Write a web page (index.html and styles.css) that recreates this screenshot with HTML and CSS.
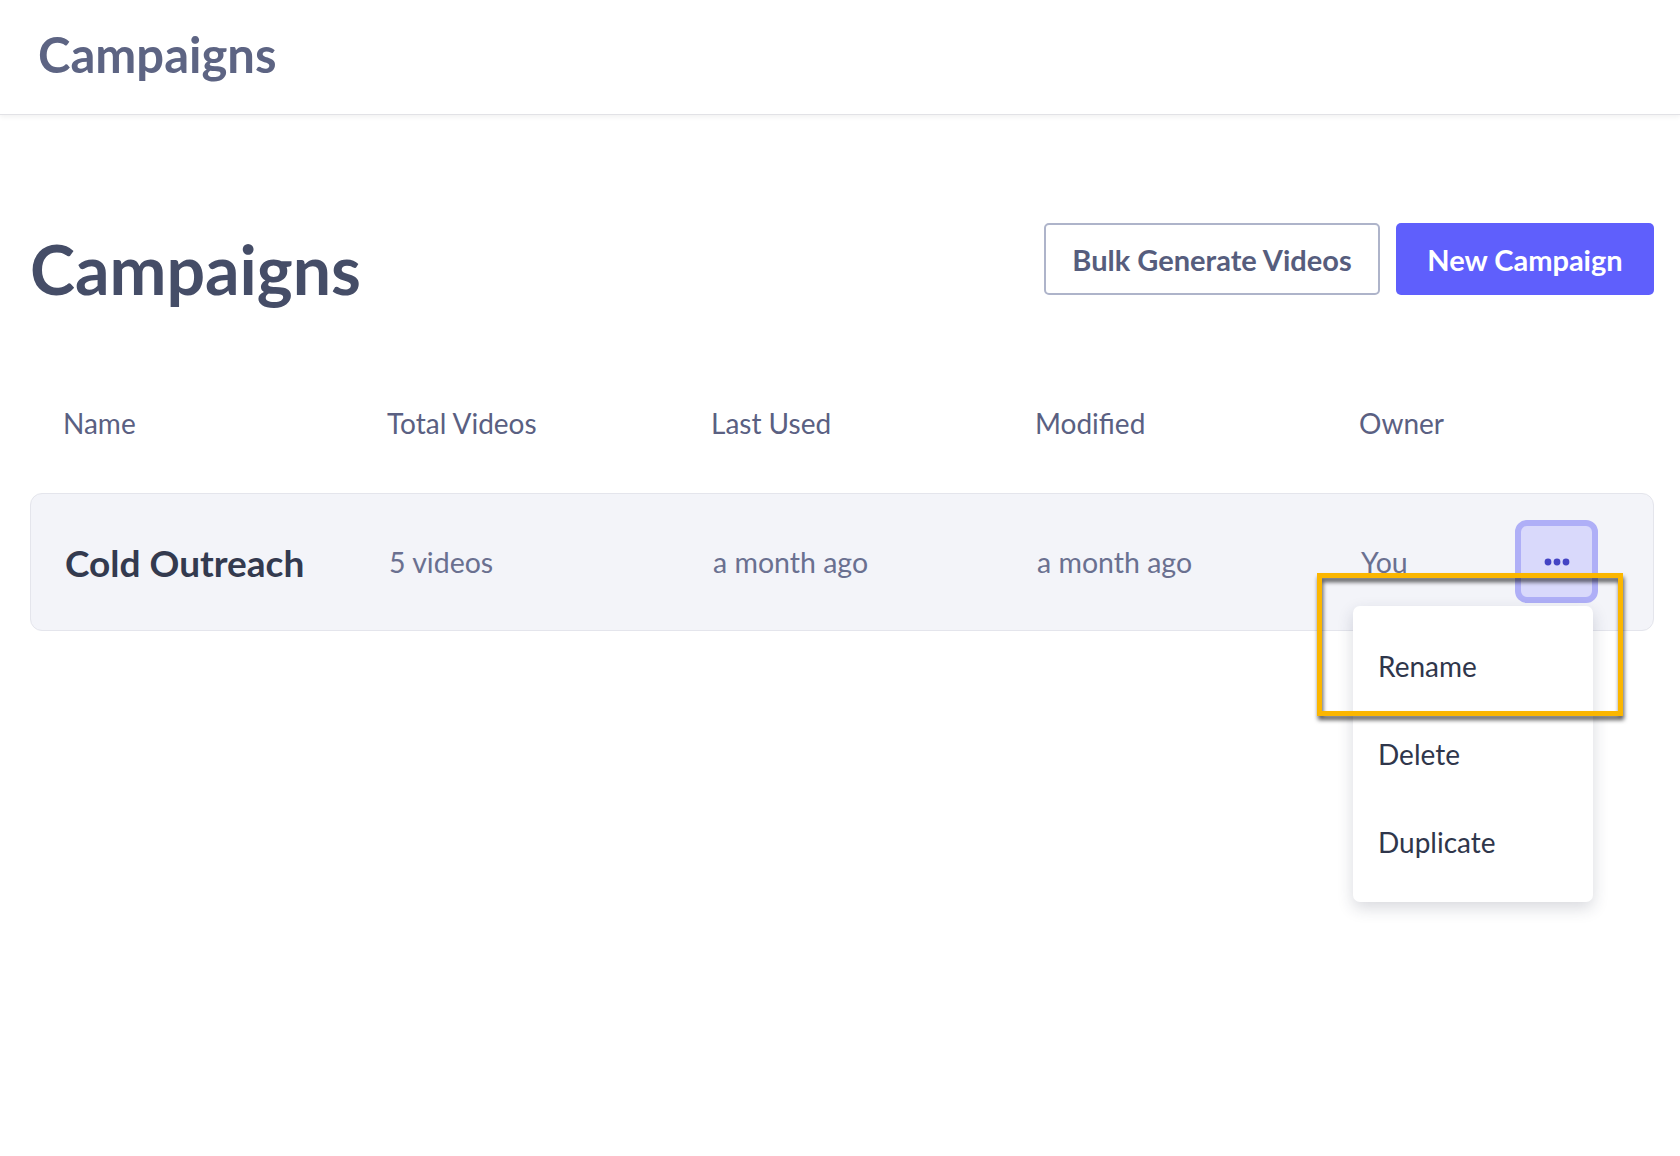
FILE: index.html
```html
<!DOCTYPE html>
<html lang="en">
<head>
    <meta charset="UTF-8">
    <meta name="viewport" content="width=device-width, initial-scale=1.0">
    <title>Campaigns</title>
    <link rel="stylesheet" href="styles.css">
</head>
<body>
    <header class="topbar">
        <h1>Campaigns</h1>
    </header>
    <main class="page">
        <div class="page-head">
            <h2>Campaigns</h2>
            <div class="actions">
                <button class="btn btn-outline">Bulk Generate Videos</button>
                <button class="btn btn-primary">New Campaign</button>
            </div>
        </div>

        <div class="table">
            <div class="table-head">
                <span>Name</span>
                <span>Total Videos</span>
                <span>Last Used</span>
                <span>Modified</span>
                <span>Owner</span>
            </div>
            <div class="table-row">
                <span class="name">Cold Outreach</span>
                <span>5 videos</span>
                <span>a month ago</span>
                <span>a month ago</span>
                <span>You</span>
                <div class="menu-wrap">
                    <button class="more-btn" aria-label="More">
                        <svg width="26" height="8" viewBox="0 0 26 8">
                            <circle cx="4" cy="4" r="3.4" fill="#4343c4"/>
                            <circle cx="13" cy="4" r="3.4" fill="#4343c4"/>
                            <circle cx="22" cy="4" r="3.4" fill="#4343c4"/>
                        </svg>
                    </button>
                    <ul class="dropdown">
                        <li>Rename</li>
                        <li>Delete</li>
                        <li>Duplicate</li>
                    </ul>
                    <!-- annotation box around the first menu item -->
                    <div class="highlight"></div>
                </div>
            </div>
        </div>
    </main>
</body>
</html>
```

FILE: styles.css
```css
body {
    margin: 0;
    font-family: Lato, "Open Sans", sans-serif;
    background: #fff;
    color: #464e68;
}
.topbar {
    height: 114px;
    display: flex;
    align-items: center;
    padding-left: 38px;
    border-bottom: 1px solid #e2e2e6;
    box-shadow: 0 2px 5px rgba(0, 0, 0, 0.06);
}
.topbar h1 {
    margin: 0;
    font-size: 49px;
    font-weight: 700;
    color: #5d6483;
    padding-bottom: 6px;
}
.page {
    padding: 0 26px 320px 30px;
}
.page-head {
    display: flex;
    justify-content: space-between;
    align-items: flex-start;
    margin-top: 108px;
}
.page-head h2 {
    margin: 12px 0 0;
    font-size: 68px;
    line-height: 1;
    font-weight: 700;
    color: #454d67;
}
.actions {
    display: flex;
    gap: 16px;
}
.btn {
    height: 72px;
    padding: 0;
    font-family: inherit;
    font-size: 29px;
    font-weight: 700;
    border-radius: 5px;
    cursor: pointer;
}
.btn-outline {
    background: #fff;
    border: 2px solid #aeb4ca;
    color: #565d7d;
    width: 336px;
}
.btn-primary {
    background: #5f5ffc;
    border: none;
    color: #fff;
    width: 258px;
}
.table-head,
.table-row {
    display: grid;
    grid-template-columns: 324px 324px 324px 324px 1fr;
    align-items: center;
}
.table-head {
    margin-top: 103px;
    padding-left: 33px;
    font-size: 28px;
    line-height: 34px;
    color: #5a6082;
}
.table-row {
    margin-top: 53px;
    height: 136px;
    padding-left: 34px;
    background: #f3f4f9;
    border: 1px solid #e4e5ec;
    border-radius: 12px;
    font-size: 28.5px;
    color: #6a7090;
    position: relative;
}
.table-row .name {
    font-size: 37px;
    font-weight: 700;
    color: #333a4f;
}
.menu-wrap {
    position: absolute;
    right: 55px;
    top: 26px;
}
.more-btn {
    width: 83px;
    height: 83px;
    display: flex;
    align-items: center;
    justify-content: center;
    background: #d9d9fb;
    border: 6px solid #afaff7;
    border-radius: 12px;
    padding: 0;
}
.dropdown {
    position: absolute;
    top: 86px;
    right: 5px;
    width: 240px;
    margin: 0;
    padding: 16px 0;
    list-style: none;
    background: #fff;
    border-radius: 7px;
    box-shadow: 0 6px 16px rgba(40, 45, 70, 0.18);
}
.dropdown li {
    height: 88px;
    display: flex;
    align-items: center;
    padding-left: 25px;
    font-size: 28px;
    color: #2f364b;
}
.highlight {
    position: absolute;
    top: 53px;
    right: -25px;
    width: 296px;
    height: 133px;
    border: 5px solid #fbb600;
    filter: drop-shadow(1px 4px 2px rgba(0, 0, 0, 0.65));
}
```
